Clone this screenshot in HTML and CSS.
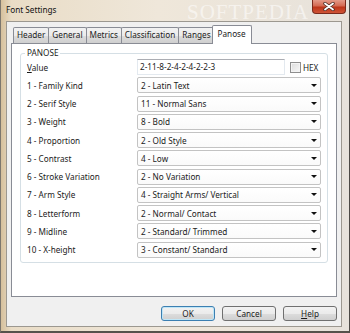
FILE: index.html
```html
<!DOCTYPE html>
<html>
<head>
	<meta charset="utf-8">
	<title>Font Settings</title>
	<link rel="stylesheet" href="styles.css">
</head>
<body>
	<div class="fs-window">
		<div class="fs-titlebar">
			<span class="fs-title">Font Settings</span>
			<div class="fs-close">
				<svg width="12" height="9" viewBox="0 0 12 9">
					<path d="M2 1.5 L10 7.5 M10 1.5 L2 7.5" stroke="#4a2a22" stroke-width="3.4" stroke-linecap="round"/>
					<path d="M2 1.5 L10 7.5 M10 1.5 L2 7.5" stroke="#ffffff" stroke-width="1.8" stroke-linecap="round"/>
				</svg>
			</div>
		</div>
		<div class="fs-client">
			<div class="fs-tabs">
				<div class="fs-tab">Header</div>
				<div class="fs-tab">General</div>
				<div class="fs-tab">Metrics</div>
				<div class="fs-tab">Classification</div>
				<div class="fs-tab">Ranges</div>
				<div class="fs-tab fs-tab-active">Panose</div>
			</div>
			<div class="fs-panel">
				<fieldset class="fs-group">
					<legend>PANOSE</legend>
					<div class="fs-grid">
						<div class="fs-label"><u>V</u>alue</div>
						<div class="fs-value">
							<div class="fs-input">2-11-8-2-4-2-4-2-2-3</div>
							<span class="fs-check"></span>
							<span class="fs-check-label">HEX</span>
						</div>

						<div class="fs-label">1 - Family Kind</div>
						<div class="fs-combo"><span>2 - Latin Text</span><i></i></div>

						<div class="fs-label">2 - Serif Style</div>
						<div class="fs-combo"><span>11 - Normal Sans</span><i></i></div>

						<div class="fs-label">3 - Weight</div>
						<div class="fs-combo"><span>8 - Bold</span><i></i></div>

						<div class="fs-label">4 - Proportion</div>
						<div class="fs-combo"><span>2 - Old Style</span><i></i></div>

						<div class="fs-label">5 - Contrast</div>
						<div class="fs-combo"><span>4 - Low</span><i></i></div>

						<div class="fs-label">6 - Stroke Variation</div>
						<div class="fs-combo"><span>2 - No Variation</span><i></i></div>

						<div class="fs-label">7 - Arm Style</div>
						<div class="fs-combo"><span>4 - Straight Arms/ Vertical</span><i></i></div>

						<div class="fs-label">8 - Letterform</div>
						<div class="fs-combo"><span>2 - Normal/ Contact</span><i></i></div>

						<div class="fs-label">9 - Midline</div>
						<div class="fs-combo"><span>2 - Standard/ Trimmed</span><i></i></div>

						<div class="fs-label">10 - X-height</div>
						<div class="fs-combo"><span>3 - Constant/ Standard</span><i></i></div>
					</div>
				</fieldset>
			</div>
			<div class="fs-buttons">
				<div class="fs-button fs-default">OK</div>
				<div class="fs-button">Cancel</div>
				<div class="fs-button"><u>H</u>elp</div>
			</div>
		</div>
		<div class="fs-mark">SOFTPEDIA</div>
	</div>
</body>
</html>
```

FILE: styles.css
```css
body {
	margin: 0;
	background-color: #e9dfcf;
	font-family: 'Noto Sans', 'DejaVu Sans', sans-serif;
	font-size: 8.2px;
	color: #1b1b1b;
	overflow: hidden;
}

.fs-window {
	position: relative;
	display: flex;
	flex-direction: column;
	box-sizing: border-box;
	width: 350px;
	height: 333px;
	border-left: 1px solid #7d776e;
	border-right: 1px solid #4d4a46;
	border-bottom: 2px solid #56524c;
	background: linear-gradient(90deg, #d6c09c 0, #e9dcc6 3%, #efe7da 45%, #e7e2db 100%);
}

/* Title bar */

.fs-titlebar {
	display: flex;
	justify-content: space-between;
	align-items: flex-start;
	height: 21px;
	padding-left: 5px;
}

.fs-title {
	padding-top: 4px;
	line-height: 12px;
	font-size: 8.2px;
	color: #111;
}

.fs-close {
	display: flex;
	align-items: center;
	justify-content: center;
	width: 32px;
	height: 13px;
	margin-right: 3px;
	border: 1px solid #7a2a1c;
	border-top: none;
	border-radius: 0 0 4px 4px;
	background: linear-gradient(#e49a88 0%, #d46a52 45%, #bd3519 55%, #cf5436 100%);
}

/* Client area */

.fs-client {
	flex: 1;
	display: flex;
	flex-direction: column;
	margin: 0 7px 4px 5px;
	padding: 3px 4px 5px 4px;
	border: 1px solid #9c9890;
	background-color: #f0f0f0;
}

.fs-tabs {
	position: relative;
	z-index: 1;
	display: flex;
	align-items: flex-end;
	height: 18px;
	padding-left: 2px;
}

.fs-tab {
	box-sizing: border-box;
	height: 16px;
	line-height: 14px;
	padding: 0 3px;
	margin-right: -1px;
	border: 1px solid #898c95;
	border-bottom: none;
	border-radius: 2px 2px 0 0;
	background: linear-gradient(#f2f2f2 0%, #ebebeb 50%, #dddddd 51%, #cfcfcf 100%);
}

.fs-tab-active {
	height: 19px;
	margin: 0 0 -1px -2px;
	padding: 0 5px;
	line-height: 16px;
	background: #fff;
}

.fs-panel {
	flex: 1;
	padding: 3px 8px 0 8px;
	border: 1px solid #898c95;
	background-color: #fff;
}

/* Group box */

.fs-group {
	margin: 0;
	padding: 0 6px 4px 6px;
	border: 1px solid #d5dfe5;
	border-radius: 3px;
}

.fs-group legend {
	padding: 0 2px;
	margin-left: -2px;
	line-height: 12px;
}

.fs-grid {
	display: grid;
	grid-template-columns: 110px 1fr;
	grid-auto-rows: 16px;
	row-gap: 2.25px;
}

.fs-label {
	align-self: center;
	white-space: nowrap;
}

.fs-value {
	display: flex;
	align-items: center;
}

.fs-input {
	box-sizing: border-box;
	width: 148px;
	height: 16px;
	line-height: 14px;
	padding-left: 2px;
	border: 1px solid #e3e9ef;
	border-top-color: #abadb3;
}

.fs-check {
	box-sizing: border-box;
	width: 11px;
	height: 11px;
	margin-left: 5px;
	border: 1px solid #8f8f8f;
	background: linear-gradient(135deg, #dcdcdc, #f8f8f8);
	box-shadow: inset 0 0 0 1px #f4f4f4;
}

.fs-check-label {
	margin-left: 2px;
}

.fs-combo {
	display: flex;
	align-items: center;
	justify-content: space-between;
	box-sizing: border-box;
	height: 16px;
	padding: 0 3px 0 3px;
	border: 1px solid #c3c3c3;
	border-radius: 2px;
	background: linear-gradient(#ffffff, #fafafa);
	white-space: nowrap;
}

.fs-combo i {
	width: 0;
	height: 0;
	border-left: 3px solid transparent;
	border-right: 3px solid transparent;
	border-top: 3px solid #111;
}

/* Buttons */

.fs-buttons {
	display: flex;
	justify-content: flex-end;
	gap: 7px;
	margin-top: 9px;
}

.fs-button {
	box-sizing: border-box;
	width: 54px;
	height: 15px;
	line-height: 13px;
	text-align: center;
	border: 1px solid #707070;
	border-radius: 3px;
	background: linear-gradient(#f2f2f2 0%, #ebebeb 50%, #dddddd 51%, #cfcfcf 100%);
}

.fs-default {
	border-color: #3c7fb1;
	box-shadow: inset 0 0 0 1px #bfe6f7;
}

/* Watermark */

.fs-mark {
	position: absolute;
	left: 186px;
	top: 0;
	font-family: 'Liberation Serif', serif;
	font-size: 21px;
	letter-spacing: 1px;
	color: rgba(255, 255, 255, 0.55);
	pointer-events: none;
	white-space: nowrap;
}
```
